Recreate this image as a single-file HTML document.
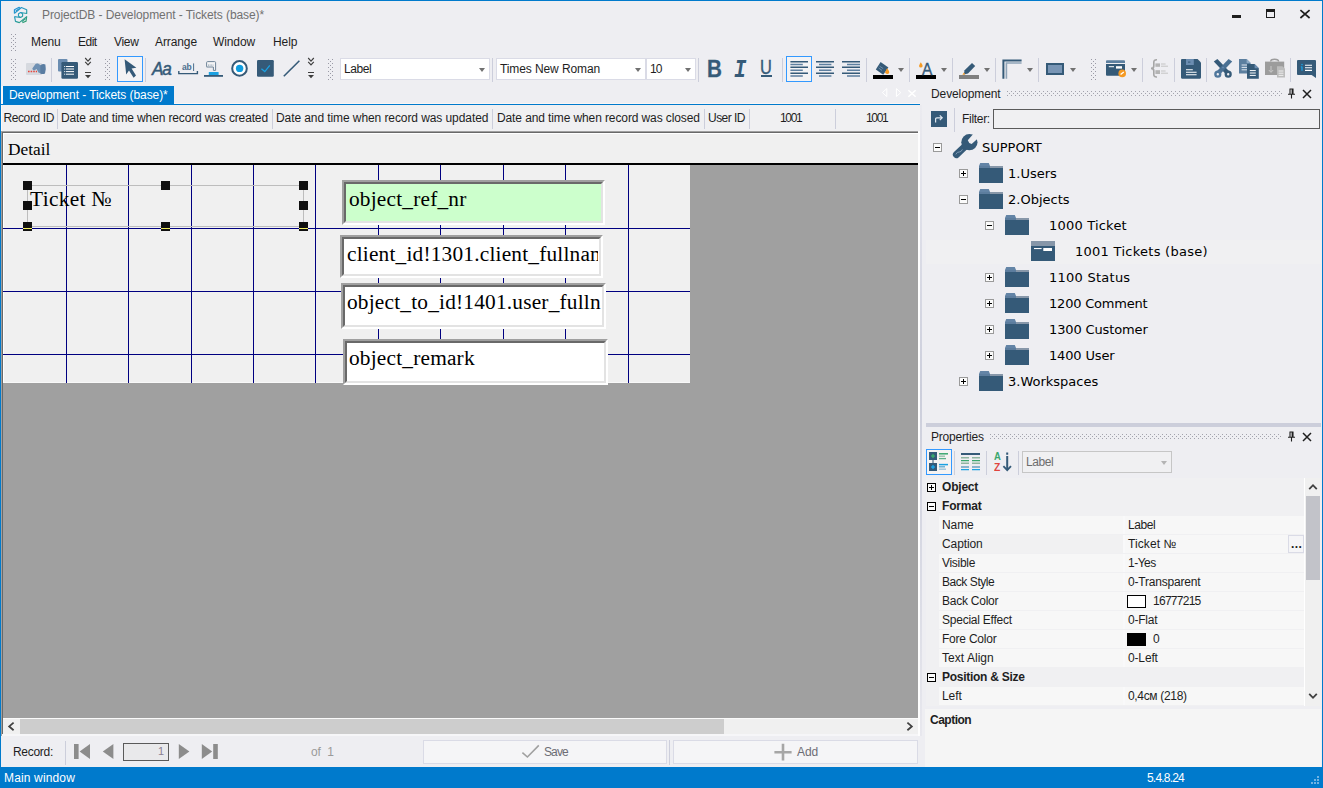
<!DOCTYPE html>
<html><head><meta charset="utf-8"><title>ProjectDB - Development - Tickets (base)*</title>
<style>
html,body{margin:0;padding:0}
body{width:1323px;height:788px;position:relative;overflow:hidden;background:#eeeef2;font-family:"Liberation Sans",sans-serif;font-size:12px;color:#1e1e1e;line-height:14px}
.a,.t,.sep,.grip,.dd,svg{position:absolute}
.t{white-space:pre;line-height:14px;height:14px;letter-spacing:-0.1px}
.sep{width:1px;background:#cccedb}
.grip{width:5px;background-image:radial-gradient(circle at 0.5px 0.5px,#9a9aa6 0.6px,transparent 0.8px),radial-gradient(circle at 2.5px 2.5px,#9a9aa6 0.6px,transparent 0.8px);background-size:4px 4px}
.dd{width:0;height:0;border-left:3.5px solid transparent;border-right:3.5px solid transparent;border-top:4px solid #717171}
.combo{position:absolute;background:#fff;border:1px solid #dadbe6;box-sizing:border-box}
.ser{font-family:"Liberation Serif",serif}
.tree{font-family:"DejaVu Sans",sans-serif;font-size:13px;line-height:16px;height:16px;letter-spacing:0}
.b{font-weight:bold}
.hd{width:9px;height:9px;background:#101010}
.tb{position:absolute;box-sizing:border-box;border:2px solid;border-color:#a0a0a0 #fff #fff #a0a0a0}
.tb i{display:block;width:100%;height:100%;box-sizing:border-box;border:2px solid;border-color:#696969 #e3e3e3 #e3e3e3 #696969;background:#fff}
.f{font-size:21.33px;height:25px;line-height:25px;color:#000;letter-spacing:.2px}
.dots{position:absolute;background-image:radial-gradient(circle at 0.5px 0.5px,#a3a3ad 0.6px,transparent 0.8px),radial-gradient(circle at 2.5px 2.5px,#a3a3ad 0.6px,transparent 0.8px);background-size:4px 4px}
</style></head><body>
<!--TITLEBAR-->
<svg style="left:8px;top:2px" width="28" height="26" viewBox="8 2 28 26" fill="none" stroke="url(#lg)" stroke-width="1.15" stroke-linejoin="round">
<defs><linearGradient id="lg" gradientUnits="userSpaceOnUse" x1="14" y1="7" x2="27" y2="23"><stop offset="0" stop-color="#1c8ee0"/><stop offset=".5" stop-color="#2a9db4"/><stop offset="1" stop-color="#2f9e62"/></linearGradient></defs>
<path d="M14.4 13.4 V9.8 L19.2 7.3 L19.8 8.3"/><path d="M14.5 13.4 L21.4 7.5 L26.7 9.7 V13.5 L20.6 12.5"/><path d="M15.6 11.3 L19.6 8.5"/>
<path d="M18.5 13.7 L20.6 12.6 L22.6 13.7 V16.3 L20.6 17.4 L18.5 16.3Z"/>
<path d="M14.3 16.6 L20.6 17.5"/><path d="M14.6 16.8 L15.5 21.4 L19.3 22.6 L26.7 16.6 L26 21.3 L22.4 22.6"/><path d="M21.8 21.6 L25.6 18.6"/>
</svg>
<div class="t" style="left:42px;top:8px;color:#717171;letter-spacing:-0.08px">ProjectDB - Development - Tickets (base)*</div>
<div class="a" style="left:1232px;top:15px;width:9px;height:3px;background:#1e1e1e"></div>
<div class="a" style="left:1266px;top:9px;width:9px;height:9px;box-sizing:border-box;border:1px solid #1e1e1e;border-top-width:3px"></div>
<svg style="left:1299px;top:8px" width="12" height="12" viewBox="0 0 12 12"><path d="M1.4 2.2 L10.6 10 M10.6 2.2 L1.4 10" stroke="#1e1e1e" stroke-width="1.7" fill="none"/></svg>
<!--MENU-->
<div class="grip" style="left:11px;top:34px;height:18px"></div>
<div class="t" style="left:31px;top:35px">Menu</div>
<div class="t" style="left:78px;top:35px;letter-spacing:-.5px">Edit</div>
<div class="t" style="left:114px;top:35px;letter-spacing:-.3px">View</div>
<div class="t" style="left:155px;top:35px">Arrange</div>
<div class="t" style="left:213px;top:35px">Window</div>
<div class="t" style="left:273px;top:35px">Help</div>
<!--TOOLBAR-->
<div class="grip" style="left:11px;top:59px;height:22px"></div>
<svg style="left:25px;top:61px" width="22" height="16" viewBox="25 61 22 16">
<rect x="26" y="63" width="16" height="12" rx="1" fill="#d6d9df"/>
<path d="M28 71.5h9" stroke="#e8463c" stroke-width="1.4" stroke-dasharray="1.6 1"/>
<path d="M32.3 68.5 L35.5 64 Q36.5 63 38 63.6 L41 65.4 L41 73.6 L38.4 72.6 L36.6 69 L34.2 70.4 Q32.6 70.4 32.3 68.5Z" fill="#6f90b3"/>
<path d="M40.4 65.2 Q43 63.2 45.4 64.4 Q46.4 69 45 73.6 Q42.6 74.6 40.4 73.6 Z" fill="#5a7da2"/>
</svg>
<div class="sep" style="left:51px;top:58px;height:24px"></div>
<svg style="left:57px;top:58px" width="22" height="22" viewBox="57 58 22 22">
<rect x="58" y="59" width="9.5" height="12.5" rx="1" fill="#6b8db1"/>
<rect x="61.4" y="62" width="16.6" height="16.8" rx="1.2" fill="#355a78"/>
<path d="M66 66.5h8M66 69h8M66 71.6h8M66 74.2h8" stroke="#fff" stroke-width="1"/>
<path d="M64.2 66.5h1M64.2 69h1M64.2 71.6h1M64.2 74.2h1" stroke="#fff" stroke-width="1"/>
</svg>
<svg class="ovf" style="left:84px;top:57px" width="8" height="23" viewBox="0 0 8 23"><path d="M1.2 1 L4 4.2 L6.8 1 M1.2 4.8 L4 8 L6.8 4.8" stroke="#3e3e3e" stroke-width="1.15" fill="none"/><path d="M1 15.5h6" stroke="#3e3e3e" stroke-width="1"/><path d="M1 18h6l-3 3.2z" fill="#3e3e3e"/></svg>
<div class="grip" style="left:105px;top:59px;height:22px"></div>
<div class="a" style="left:117px;top:56px;width:26px;height:26px;box-sizing:border-box;border:1px solid #3399ff;background:#f4f3f4"></div>
<svg style="left:122px;top:58px" width="17" height="21" viewBox="122 58 17 21"><path d="M124.6 59.2 L136.4 67.8 L131.6 68.6 L136 75.6 L133.6 77.8 L129 70.4 L126.2 74.4 Z" fill="#355a78"/></svg>
<div class="sep" style="left:145px;top:58px;height:24px"></div>
<div class="t" style="left:152px;top:59px;height:20px;line-height:20px;font-size:18px;font-style:italic;color:#355a78;letter-spacing:-1.2px;transform-origin:0 0;transform:scaleX(.95);-webkit-text-stroke:.5px #355a78">Aa</div>
<svg style="left:177px;top:62px" width="22" height="14" viewBox="177 62 22 14"><path d="M178.8 71 V73.6 H197.4 V71" stroke="#355a78" stroke-width="1.4" fill="none"/><text x="182" y="69.6" font-family="Liberation Sans,sans-serif" font-size="8.5" font-weight="bold" fill="#4c6f8e" letter-spacing="-0.3">ab</text><path d="M193.6 63.4V71" stroke="#4c6f8e" stroke-width="1"/></svg>
<svg style="left:203px;top:60px" width="21" height="18" viewBox="203 60 21 18">
<path d="M206.6 66.6 V62.6 Q206.6 61.6 207.6 61.6 H214.6 Q215.6 61.6 215.6 62.6 V70.4 H213.4 V67 H206.6Z" fill="#f4f4f6" stroke="#6f8499" stroke-width="1"/>
<path d="M208 65.2h5.4" stroke="#9aabbb" stroke-width="1.2" stroke-dasharray="1 .6"/>
<rect x="208.8" y="72" width="9.8" height="3" fill="#1ba1e2"/>
<rect x="204" y="75" width="19" height="1.8" fill="#355a78"/>
</svg>
<svg style="left:230px;top:59px" width="19" height="19" viewBox="230 59 19 19"><circle cx="239.5" cy="68.4" r="7.3" fill="#fff" stroke="#355a78" stroke-width="2"/><circle cx="239.6" cy="68.4" r="3.7" fill="#0e9de0"/></svg>
<svg style="left:256px;top:59px" width="19" height="19" viewBox="256 59 19 19"><rect x="257" y="60" width="16.8" height="16.8" rx="1.2" fill="#355a78"/><path d="M261.4 68.8 L264.8 71.6 L269.8 65.4" stroke="#1ba1e2" stroke-width="1.3" fill="none"/></svg>
<svg style="left:282px;top:59px" width="19" height="19" viewBox="282 59 19 19"><path d="M283.8 76.2 L299.4 60.8" stroke="#355a78" stroke-width="1.6"/></svg>
<svg class="ovf" style="left:307px;top:57px" width="8" height="23" viewBox="0 0 8 23"><path d="M1.2 1 L4 4.2 L6.8 1 M1.2 4.8 L4 8 L6.8 4.8" stroke="#3e3e3e" stroke-width="1.15" fill="none"/><path d="M1 15.5h6" stroke="#3e3e3e" stroke-width="1"/><path d="M1 18h6l-3 3.2z" fill="#3e3e3e"/></svg>
<div class="grip" style="left:328px;top:59px;height:22px"></div>
<div class="combo" style="left:340px;top:58px;width:150px;height:22px"></div>
<div class="t" style="left:344px;top:62px;letter-spacing:-.4px">Label</div>
<div class="dd" style="left:479px;top:68px"></div>
<div class="sep" style="left:492px;top:58px;height:24px"></div>
<div class="combo" style="left:496px;top:58px;width:150px;height:22px"></div>
<div class="t" style="left:500px;top:62px">Times New Roman</div>
<div class="dd" style="left:635px;top:68px"></div>
<div class="combo" style="left:646px;top:58px;width:50px;height:22px"></div>
<div class="t" style="left:650px;top:62px;letter-spacing:-1px">10</div>
<div class="dd" style="left:685px;top:68px"></div>
<div class="sep" style="left:698px;top:58px;height:24px"></div>
<div class="t b" style="left:707px;top:55px;height:28px;line-height:28px;font-size:24px;color:#355a78;transform-origin:0 0;transform:scaleX(.86);letter-spacing:0;-webkit-text-stroke:.3px #355a78">B</div>
<div class="t b" style="left:734px;top:57px;height:28px;line-height:28px;font-size:25px;color:#355a78;font-family:'Liberation Mono',monospace;font-style:italic;letter-spacing:0;transform-origin:0 0;transform:scaleX(.82)">I</div>
<div class="t" style="left:760px;top:56px;height:22px;line-height:22px;font-size:20.5px;color:#355a78;transform-origin:0 0;transform:scaleX(.8);letter-spacing:0;-webkit-text-stroke:.4px #355a78">U</div>
<div class="a" style="left:761px;top:75px;width:11px;height:2px;background:#355a78"></div>
<div class="sep" style="left:782px;top:58px;height:24px"></div>
<div class="a" style="left:786px;top:56px;width:26px;height:26px;box-sizing:border-box;border:1px solid #3399ff;background:#f4f3f4"></div>
<svg style="left:789px;top:60px" width="72" height="18" viewBox="789 60 72 18" stroke-width="1.5">
<path d="M790.4 61.8h17.6M790.4 67.3h17.6M790.4 73.2h17.6" stroke="#355a78"/><path d="M790.4 64.5h12.4M790.4 70.2h12.4M790.4 76h12.4" stroke="#5d7f9f"/>
<path d="M816 61.8h18M816 67.3h18M816 73.2h18" stroke="#355a78"/><path d="M819 64.5h12.4M819 70.2h12.4M819 76h12.4" stroke="#5d7f9f"/>
<path d="M842 61.8h18M842 67.3h18M842 73.2h18" stroke="#355a78"/><path d="M847 64.5h13M847 70.2h13M847 76h13" stroke="#5d7f9f"/>
</svg>
<div class="sep" style="left:866px;top:58px;height:24px"></div>
<svg style="left:872px;top:60px" width="22" height="20" viewBox="872 60 22 20">
<path d="M880.6 62 L888.4 67.4 L883.2 74.8 L875.8 69.6 Z" fill="#355a78"/><path d="M879.6 66.2 l3.6 2.4 M878.6 68 l3.4 2.4" stroke="#7f9ab5" stroke-width=".8"/>
<path d="M887.2 68.2 Q889.4 71 889.2 72.4 Q888.8 74 887.2 74 Q885.4 74 885.2 72.2 Q885.4 70.6 887.2 68.2Z" fill="#f59a23"/>
<rect x="873" y="75" width="20" height="4" fill="#000"/></svg>
<div class="dd" style="left:898px;top:68px"></div>
<div class="sep" style="left:909px;top:58px;height:24px"></div>
<svg style="left:915px;top:60px" width="22" height="20" viewBox="915 60 22 20">
<path d="M920.8 62.2 Q922.8 65 922.6 66.2 Q922.2 67.6 920.8 67.6 Q919.2 67.6 919 66 Q919.2 64.6 920.8 62.2Z" fill="#f59a23"/>
<rect x="916" y="75" width="20" height="4" fill="#000"/></svg>
<div class="t" style="left:921.8px;top:58.7px;height:20px;line-height:20px;font-size:17.2px;color:#355a78;letter-spacing:0;transform-origin:0 0;transform:scaleX(.9);-webkit-text-stroke:.35px #355a78">A</div>
<div class="dd" style="left:941px;top:68px"></div>
<div class="sep" style="left:952px;top:58px;height:24px"></div>
<svg style="left:958px;top:60px" width="22" height="20" viewBox="958 60 22 20">
<path d="M964.6 70.2 L972 63 L975.2 66 L968 73.4 L963.8 74.4 Z" fill="#355a78"/><path d="M962.4 75 L963.8 72.6 L965.4 74.2Z" fill="#f59a23"/>
<rect x="959" y="75" width="20" height="4" fill="#808080"/></svg>
<div class="dd" style="left:984px;top:68px"></div>
<div class="sep" style="left:995px;top:58px;height:24px"></div>
<svg style="left:1001px;top:58px" width="22" height="22" viewBox="1001 58 22 22"><path d="M1003.4 78.8 V60.4 H1021.6" stroke="#355a78" stroke-width="2" fill="none"/><path d="M1006.4 78.8 V63 H1021.6" stroke="#8fa4b8" stroke-width="1.6" fill="none"/></svg>
<div class="dd" style="left:1027px;top:68px"></div>
<div class="sep" style="left:1038px;top:58px;height:24px"></div>
<div class="a" style="left:1046px;top:63px;width:18px;height:12px;box-sizing:border-box;border:2px solid #355a78;background:#7895b5"></div>
<div class="dd" style="left:1070px;top:68px"></div>
<div class="grip" style="left:1091px;top:59px;height:22px"></div>
<svg style="left:1105px;top:59px" width="23" height="20" viewBox="1105 59 23 20">
<path d="M1106 61.2 Q1106 60.2 1107 60.2 H1124 Q1125 60.2 1125 61.2 V63 H1106Z" fill="#5c7f9f"/>
<path d="M1106 64 H1125 V74.8 Q1125 75.8 1124 75.8 H1107 Q1106 75.8 1106 74.8Z" fill="#355a78"/>
<rect x="1108.8" y="66.2" width="5.2" height="1" fill="#fff"/><rect x="1116" y="66.2" width="6" height="2.4" fill="#fff"/>
<circle cx="1122.2" cy="73.4" r="3.8" fill="#f59a23"/><path d="M1120.6 74.6 l3.2 -2.6" stroke="#fff" stroke-width="1.3"/></svg>
<div class="dd" style="left:1131px;top:68px"></div>
<div class="sep" style="left:1142px;top:58px;height:24px"></div>
<svg style="left:1149px;top:58px" width="21" height="21" viewBox="1149 58 21 21">
<path d="M1157 59.8 Q1153.6 59.6 1153.8 62.4 V66 Q1153.8 68.4 1151 68.4 Q1153.8 68.4 1153.8 70.8 V74.4 Q1153.6 77.2 1157 77" stroke="#a6a6a6" stroke-width="1.6" fill="none"/>
<rect x="1155.4" y="63.4" width="4.6" height="3.4" fill="#b4b4b4"/><rect x="1155.4" y="70.2" width="4.6" height="3.8" fill="#b4b4b4"/>
<path d="M1161 64h4.6M1161 66.2h7M1161 71h4.6M1161 73.2h7" stroke="#c4c4c4" stroke-width="1"/></svg>
<div class="sep" style="left:1174px;top:58px;height:24px"></div>
<svg style="left:1180px;top:58px" width="22" height="22" viewBox="1180 58 22 22">
<path d="M1182 59 H1197.6 L1201 62.4 V77.6 Q1201 78.7 1200 78.7 H1182 Q1181 78.7 1181 77.6 V60 Q1181 59 1182 59Z" fill="#355a78"/>
<rect x="1186" y="59" width="7.8" height="6" fill="#6b8db1"/><rect x="1188" y="61.6" width="2.4" height="1" fill="#355a78"/>
<path d="M1186 69.8h6.8M1186 72.2h10.6M1186 74.7h10.6" stroke="#fff" stroke-width="1.1"/></svg>
<div class="sep" style="left:1206px;top:58px;height:24px"></div>
<svg style="left:1213px;top:58px" width="21" height="21" viewBox="1213 58 21 21">
<path d="M1213.8 61.4 L1217.4 59 L1230.4 72.4 L1226.6 75Z" fill="#355a78"/><path d="M1232.2 61.4 L1228.6 59 L1215.6 72.4 L1219.4 75Z" fill="#4a7093"/>
<circle cx="1217.8" cy="74.2" r="2.4" fill="#eeeef2" stroke="#4f779c" stroke-width="2.4"/><circle cx="1228.2" cy="74.2" r="2.4" fill="#eeeef2" stroke="#355a78" stroke-width="2.4"/><circle cx="1223" cy="67.6" r=".8" fill="#6b8db1"/></svg>
<svg style="left:1238px;top:58px" width="22" height="22" viewBox="1238 58 22 22">
<path d="M1239 59 H1246.6 L1250.6 63 V73.4 H1239Z" fill="#5c7f9f"/><path d="M1246.6 59 V63 H1250.6Z" fill="#8fabc6"/>
<path d="M1241.6 65h6M1241.6 67.4h6M1241.6 69.8h6" stroke="#dfe7ef" stroke-width="1"/>
<path d="M1247 64 H1254.6 L1258.8 68.2 V78.7 H1247Z" fill="#355a78"/><path d="M1254.6 64 V68.2 H1258.8Z" fill="#6b8db1"/>
<path d="M1249.8 70.6h6M1249.8 73h6M1249.8 75.4h6" stroke="#fff" stroke-width="1"/></svg>
<svg style="left:1264px;top:58px" width="22" height="22" viewBox="1264 58 22 22">
<path d="M1265 61.6 H1284.2 V75 H1265Z" fill="#9c9c9c"/><path d="M1270.6 61.6 Q1270.6 59.2 1274.6 59.2 Q1278.6 59.2 1278.6 61.6" stroke="#9c9c9c" stroke-width="1.4" fill="none"/>
<path d="M1271 66v6M1268.8 70l2.2 2.4 2.2-2.4" stroke="#c8c8c8" stroke-width="1" fill="none"/>
<path d="M1277 66.2 H1282.4 L1285 68.8 V77.6 H1277Z" fill="#bcbcbc"/><path d="M1278.6 71h4.8M1278.6 73.2h4.8M1278.6 75.4h4.8" stroke="#eee" stroke-width="1"/></svg>
<div class="sep" style="left:1290px;top:58px;height:24px"></div>
<svg style="left:1296px;top:59px" width="21" height="20" viewBox="1296 59 21 20">
<path d="M1298 60 H1315 Q1316 60 1316 61 V78 L1311.6 75 H1298 Q1297 75 1297 74 V61 Q1297 60 1298 60Z" fill="#355a78"/>
<path d="M1302 66.4v4.4M1300.8 66.8h1.2" stroke="#1ba1e2" stroke-width="1.3"/><circle cx="1302" cy="64.6" r=".8" fill="#1ba1e2"/>
<path d="M1305 65.2h7M1305 67.8h7M1305 70.4h7" stroke="#fff" stroke-width="1.1"/></svg>
<!--DOC-->
<!-- tab strip -->
<div class="a" style="left:3px;top:86px;width:171px;height:18px;background:#007acc"></div>
<div class="t" style="left:9px;top:88px;color:#fff;letter-spacing:-0.07px">Development - Tickets (base)*</div>
<div class="a" style="left:1px;top:104px;width:919px;height:1px;background:#007acc"></div>
<div class="a" style="left:1px;top:105px;width:1px;height:26px;background:#fdf8f6"></div>
<div class="a" style="left:1px;top:105px;width:918px;height:1px;background:#fbf9f9"></div>
<svg style="left:880px;top:86px" width="38" height="14" viewBox="880 86 38 14"><path d="M886.8 88.6 v8 l-4.4 -4z M896.4 88.6 v8 l4.4 -4z" fill="none" stroke="#fff" stroke-width="1"/><path d="M908.4 90.2 l7.2 6.6 M915.6 90.2 l-7.2 6.6" stroke="#fff" stroke-width="1.5"/></svg>
<div class="a" style="left:174px;top:103px;width:746px;height:1px;background:#fbf6f4"></div>
<div class="a" style="left:1px;top:86px;width:2px;height:18px;background:#fdf8f6"></div>
<!-- column header -->
<div class="a" style="left:2px;top:105px;width:918px;height:26px;background:#f0f0f2"></div>
<div class="t" style="left:3.4px;top:111px;letter-spacing:-.38px">Record ID</div>
<div class="sep" style="left:57px;top:109px;height:20px"></div>
<div class="t" style="left:61px;top:111px;letter-spacing:-0.14px">Date and time when record was created</div>
<div class="sep" style="left:272px;top:109px;height:20px"></div>
<div class="t" style="left:276px;top:111px;letter-spacing:-0.085px">Date and time when record was updated</div>
<div class="sep" style="left:492px;top:109px;height:20px"></div>
<div class="t" style="left:497px;top:111px;letter-spacing:-0.11px">Date and time when record was closed</div>
<div class="sep" style="left:704px;top:109px;height:20px"></div>
<div class="t" style="left:708px;top:111px;letter-spacing:-.53px">User ID</div>
<div class="sep" style="left:749px;top:109px;height:20px"></div>
<div class="t" style="left:780px;top:111px;letter-spacing:-1.3px">1001</div>
<div class="sep" style="left:835px;top:109px;height:20px"></div>
<div class="t" style="left:866px;top:111px;letter-spacing:-1.3px">1001</div>
<!-- form design surface -->
<div class="a" style="left:2px;top:131px;width:916px;height:587px;background:#a0a0a0"></div>
<div class="a" style="left:1px;top:131px;width:917px;height:1px;background:#a0a0a0"></div>
<div class="a" style="left:1px;top:131px;width:1px;height:605px;background:#a0a0a0"></div>
<div class="a" style="left:2px;top:132px;width:916px;height:1px;background:#696969"></div>
<div class="a" style="left:2px;top:132px;width:1px;height:604px;background:#696969"></div>
<div class="a" style="left:3px;top:133px;width:915px;height:30px;background:#f0f0f0;box-sizing:border-box;border-left:1px solid #fff;border-top:1px solid #fff"></div>
<div class="t ser" style="left:8px;top:140px;font-size:17.33px;height:20px;line-height:20px;color:#000;letter-spacing:0">Detail</div>
<div class="a" style="left:3px;top:163px;width:915px;height:2px;background:#000"></div>
<div class="a" id="grid" style="left:3px;top:165px;width:687px;height:218px;background:#f0f0f0;box-sizing:border-box;border-left:1px solid #fff;border-bottom:1px solid #f8f8f8"></div>
<div class="a" style="left:66px;top:165px;width:1px;height:218px;background:#000080"></div>
<div class="a" style="left:128px;top:165px;width:1px;height:218px;background:#000080"></div>
<div class="a" style="left:191px;top:165px;width:1px;height:218px;background:#000080"></div>
<div class="a" style="left:253px;top:165px;width:1px;height:218px;background:#000080"></div>
<div class="a" style="left:315px;top:165px;width:1px;height:218px;background:#000080"></div>
<div class="a" style="left:378px;top:165px;width:1px;height:218px;background:#000080"></div>
<div class="a" style="left:440px;top:165px;width:1px;height:218px;background:#000080"></div>
<div class="a" style="left:503px;top:165px;width:1px;height:218px;background:#000080"></div>
<div class="a" style="left:565px;top:165px;width:1px;height:218px;background:#000080"></div>
<div class="a" style="left:628px;top:165px;width:1px;height:218px;background:#000080"></div>
<div class="a" style="left:3px;top:228px;width:687px;height:1px;background:#000080"></div>
<div class="a" style="left:3px;top:291px;width:687px;height:1px;background:#000080"></div>
<div class="a" style="left:3px;top:354px;width:687px;height:1px;background:#000080"></div>
<!-- label -->
<div class="a" style="left:27px;top:185px;width:277px;height:42px;box-sizing:border-box;border:1px solid #bdbdbd"></div>
<div class="t ser" style="left:30px;top:187px;font-size:21.33px;height:25px;line-height:25px;color:#000;letter-spacing:.35px">Ticket №</div>
<div class="a hd" style="left:23px;top:181px"></div>
<div class="a hd" style="left:161px;top:181px"></div>
<div class="a hd" style="left:299px;top:181px"></div>
<div class="a hd" style="left:23px;top:201px"></div>
<div class="a hd" style="left:299px;top:201px"></div>
<div class="a hd" style="left:23px;top:222px"></div>
<div class="a hd" style="left:161px;top:222px"></div>
<div class="a hd" style="left:299px;top:222px"></div>
<div class="a" style="left:23px;top:228px;width:9px;height:1px;background:#f4f060"></div>
<div class="a" style="left:161px;top:228px;width:9px;height:1px;background:#f4f060"></div>
<div class="a" style="left:299px;top:228px;width:9px;height:1px;background:#f4f060"></div>
<!-- textboxes -->
<div class="tb" style="left:342px;top:180px;width:263px;height:45px"><i style="background:#ccffcc"></i></div>
<div class="t ser f" style="left:349px;top:187px">object_ref_nr</div>
<div class="tb" style="left:340px;top:235px;width:263px;height:43px"><i></i></div>
<div class="t ser f" style="left:347px;top:242px;width:251px;overflow:hidden">client_id!1301.client_fullname</div>
<div class="tb" style="left:341px;top:283px;width:265px;height:46px"><i></i></div>
<div class="t ser f" style="left:347px;top:290px;width:254px;overflow:hidden">object_to_id!1401.user_fullname</div>
<div class="tb" style="left:343px;top:339px;width:265px;height:46px"><i></i></div>
<div class="t ser f" style="left:349px;top:346px">object_remark</div>
<!-- h scrollbar -->
<div class="a" style="left:3px;top:718px;width:915px;height:1px;background:#fafafa"></div>
<div class="a" style="left:3px;top:719px;width:915px;height:15px;background:#f0f0f0"></div>
<div class="a" style="left:20px;top:719px;width:704px;height:15px;background:#cdcdcd"></div>
<svg style="left:6px;top:721px" width="10" height="11" viewBox="0 0 10 11"><path d="M7.6 1.6 L3.2 5.4 L7.6 9.2" stroke="#404040" stroke-width="1.8" fill="none"/></svg>
<svg style="left:905px;top:721px" width="10" height="11" viewBox="0 0 10 11"><path d="M2.4 1.6 L6.8 5.4 L2.4 9.2" stroke="#404040" stroke-width="1.8" fill="none"/></svg>
<div class="a" style="left:2px;top:734px;width:917px;height:2px;background:#f6f6f8"></div>
<div class="a" style="left:918px;top:131px;width:2px;height:605px;background:#fdfdfd"></div>
<!--RIGHT-->
<div class="a" style="left:920px;top:105px;width:2px;height:631px;background:linear-gradient(to bottom,#ebebf0 0%,#e0e1ea 15%,#cccedb 45%,#dcdde6 80%,#e8e8ee 100%)"></div>
<div class="t" style="left:931px;top:87px;color:#1e1e1e">Development</div>
<div class="dots" style="left:1007px;top:91px;width:275px;height:6px"></div>
<svg style="left:1287px;top:88px" width="9" height="11" viewBox="0 0 9 11"><path d="M2.5 1 h4 M3 1 v5 M6 1 v5 M5.2 1v5 M1 6.2 h7 M4.5 6.2 v4.2" stroke="#1e1e1e" stroke-width="1.1" fill="none"/></svg>
<svg style="left:1302px;top:89px" width="10" height="10" viewBox="0 0 10 10"><path d="M1 1 L9 9 M9 1 L1 9" stroke="#1e1e1e" stroke-width="1.5" fill="none"/></svg>
<div class="a" style="left:931px;top:111px;width:16px;height:16px;background:#355a78"></div>
<svg style="left:931px;top:111px" width="16" height="16" viewBox="0 0 16 16"><path d="M4.6 11.4 V8 Q4.6 6.8 5.8 6.8 H11 M8.8 4.4 L11.2 6.8 L8.8 9.2" stroke="#dfe7ef" stroke-width="1.2" fill="none"/></svg>
<div class="sep" style="left:954px;top:108px;height:24px"></div>
<div class="t" style="left:962px;top:112px;letter-spacing:-.3px">Filter:</div>
<div class="a" style="left:993px;top:109px;width:327px;height:20px;box-sizing:border-box;border:1px solid #5a5a5a;background:#f0f0f2"></div>
<div class="a" style="left:926px;top:240px;width:395px;height:24px;background:#f0f0f2"></div>
<div class="a" style="left:933px;top:143px;width:9px;height:9px;box-sizing:border-box;border:1px solid #9a9a9a;background:#fbfbfb"></div><div class="a" style="left:935px;top:147px;width:5px;height:1px;background:#000"></div>
<svg style="left:950px;top:132px" width="29" height="29" viewBox="950 132 29 29"><path d="M956.4 154.6 L966.5 145" stroke="#355a78" stroke-width="7" stroke-linecap="round"/><circle cx="969.4" cy="142.2" r="8.1" fill="#355a78"/><path d="M967.8 140.2 L976.7 130.1 L981.7 135.1 L971.6 144 Q968.6 143.4 967.8 140.2Z" fill="#eeeef2"/><path d="M955.8 154.4 q1.4-2.8 3.4-2.4 q2 .2 3.2-2.6" stroke="#7f9ab5" stroke-width="1" fill="none"/></svg>
<div class="t tree" style="left:982px;top:140px;letter-spacing:0px;color:#000">SUPPORT</div>
<div class="a" style="left:959px;top:169px;width:9px;height:9px;box-sizing:border-box;border:1px solid #9a9a9a;background:#fbfbfb"></div><div class="a" style="left:961px;top:173px;width:5px;height:1px;background:#000"></div><div class="a" style="left:963px;top:171px;width:1px;height:5px;background:#000"></div>
<svg style="left:979px;top:163px" width="24" height="20" viewBox="0 0 24 20"><path d="M1.2 0 H9.8 L11 3 H0 Z" fill="#6384a6"/><rect x="0" y="3" width="24" height="2.2" fill="#8797a9"/><rect x="0" y="3" width="11" height="2.2" fill="#5c7d9e"/><rect x="0" y="5" width="24" height="15" fill="#355a78"/></svg>
<div class="t tree" style="left:1008px;top:166px;letter-spacing:0px;color:#000">1.Users</div>
<div class="a" style="left:959px;top:195px;width:9px;height:9px;box-sizing:border-box;border:1px solid #9a9a9a;background:#fbfbfb"></div><div class="a" style="left:961px;top:199px;width:5px;height:1px;background:#000"></div>
<svg style="left:979px;top:189px" width="24" height="20" viewBox="0 0 24 20"><path d="M1.2 0 H9.8 L11 3 H0 Z" fill="#6384a6"/><rect x="0" y="3" width="24" height="2.2" fill="#8797a9"/><rect x="0" y="3" width="11" height="2.2" fill="#5c7d9e"/><rect x="0" y="5" width="24" height="15" fill="#355a78"/></svg>
<div class="t tree" style="left:1008px;top:192px;letter-spacing:0px;color:#000">2.Objects</div>
<div class="a" style="left:985px;top:221px;width:9px;height:9px;box-sizing:border-box;border:1px solid #9a9a9a;background:#fbfbfb"></div><div class="a" style="left:987px;top:225px;width:5px;height:1px;background:#000"></div>
<svg style="left:1005px;top:215px" width="24" height="20" viewBox="0 0 24 20"><path d="M1.2 0 H9.8 L11 3 H0 Z" fill="#6384a6"/><rect x="0" y="3" width="24" height="2.2" fill="#8797a9"/><rect x="0" y="3" width="11" height="2.2" fill="#5c7d9e"/><rect x="0" y="5" width="24" height="15" fill="#355a78"/></svg>
<div class="t tree" style="left:1049px;top:218px;letter-spacing:0.2px;color:#000">1000 Ticket</div>
<svg style="left:1031px;top:241px" width="24" height="20" viewBox="0 0 24 20"><rect width="24" height="5" fill="#8797a9"/><rect y="5" width="24" height="15" fill="#355a78"/><rect x="3" y="7" width="7.6" height="1.1" fill="#fff"/><rect x="12.3" y="7" width="8.7" height="3" fill="#fff"/></svg>
<div class="t tree" style="left:1075px;top:244px;letter-spacing:0.27px;color:#000">1001 Tickets (base)</div>
<div class="a" style="left:985px;top:273px;width:9px;height:9px;box-sizing:border-box;border:1px solid #9a9a9a;background:#fbfbfb"></div><div class="a" style="left:987px;top:277px;width:5px;height:1px;background:#000"></div><div class="a" style="left:989px;top:275px;width:1px;height:5px;background:#000"></div>
<svg style="left:1005px;top:267px" width="24" height="20" viewBox="0 0 24 20"><path d="M1.2 0 H9.8 L11 3 H0 Z" fill="#6384a6"/><rect x="0" y="3" width="24" height="2.2" fill="#8797a9"/><rect x="0" y="3" width="11" height="2.2" fill="#5c7d9e"/><rect x="0" y="5" width="24" height="15" fill="#355a78"/></svg>
<div class="t tree" style="left:1049px;top:270px;letter-spacing:0.25px;color:#000">1100 Status</div>
<div class="a" style="left:985px;top:299px;width:9px;height:9px;box-sizing:border-box;border:1px solid #9a9a9a;background:#fbfbfb"></div><div class="a" style="left:987px;top:303px;width:5px;height:1px;background:#000"></div><div class="a" style="left:989px;top:301px;width:1px;height:5px;background:#000"></div>
<svg style="left:1005px;top:293px" width="24" height="20" viewBox="0 0 24 20"><path d="M1.2 0 H9.8 L11 3 H0 Z" fill="#6384a6"/><rect x="0" y="3" width="24" height="2.2" fill="#8797a9"/><rect x="0" y="3" width="11" height="2.2" fill="#5c7d9e"/><rect x="0" y="5" width="24" height="15" fill="#355a78"/></svg>
<div class="t tree" style="left:1049px;top:296px;letter-spacing:-0.2px;color:#000">1200 Comment</div>
<div class="a" style="left:985px;top:325px;width:9px;height:9px;box-sizing:border-box;border:1px solid #9a9a9a;background:#fbfbfb"></div><div class="a" style="left:987px;top:329px;width:5px;height:1px;background:#000"></div><div class="a" style="left:989px;top:327px;width:1px;height:5px;background:#000"></div>
<svg style="left:1005px;top:319px" width="24" height="20" viewBox="0 0 24 20"><path d="M1.2 0 H9.8 L11 3 H0 Z" fill="#6384a6"/><rect x="0" y="3" width="24" height="2.2" fill="#8797a9"/><rect x="0" y="3" width="11" height="2.2" fill="#5c7d9e"/><rect x="0" y="5" width="24" height="15" fill="#355a78"/></svg>
<div class="t tree" style="left:1049px;top:322px;letter-spacing:-0.13px;color:#000">1300 Customer</div>
<div class="a" style="left:985px;top:351px;width:9px;height:9px;box-sizing:border-box;border:1px solid #9a9a9a;background:#fbfbfb"></div><div class="a" style="left:987px;top:355px;width:5px;height:1px;background:#000"></div><div class="a" style="left:989px;top:353px;width:1px;height:5px;background:#000"></div>
<svg style="left:1005px;top:345px" width="24" height="20" viewBox="0 0 24 20"><path d="M1.2 0 H9.8 L11 3 H0 Z" fill="#6384a6"/><rect x="0" y="3" width="24" height="2.2" fill="#8797a9"/><rect x="0" y="3" width="11" height="2.2" fill="#5c7d9e"/><rect x="0" y="5" width="24" height="15" fill="#355a78"/></svg>
<div class="t tree" style="left:1049px;top:348px;letter-spacing:-0.15px;color:#000">1400 User</div>
<div class="a" style="left:959px;top:377px;width:9px;height:9px;box-sizing:border-box;border:1px solid #9a9a9a;background:#fbfbfb"></div><div class="a" style="left:961px;top:381px;width:5px;height:1px;background:#000"></div><div class="a" style="left:963px;top:379px;width:1px;height:5px;background:#000"></div>
<svg style="left:979px;top:371px" width="24" height="20" viewBox="0 0 24 20"><path d="M1.2 0 H9.8 L11 3 H0 Z" fill="#6384a6"/><rect x="0" y="3" width="24" height="2.2" fill="#8797a9"/><rect x="0" y="3" width="11" height="2.2" fill="#5c7d9e"/><rect x="0" y="5" width="24" height="15" fill="#355a78"/></svg>
<div class="t tree" style="left:1008px;top:374px;letter-spacing:0px;color:#000">3.Workspaces</div>
<div class="a" style="left:926px;top:423px;width:395px;height:4px;background:#cccedb"></div>
<div class="t" style="left:931px;top:430px;color:#1e1e1e;letter-spacing:-.2px">Properties</div>
<div class="dots" style="left:990px;top:434px;width:292px;height:6px"></div>
<svg style="left:1287px;top:431px" width="9" height="11" viewBox="0 0 9 11"><path d="M2.5 1 h4 M3 1 v5 M6 1 v5 M5.2 1v5 M1 6.2 h7 M4.5 6.2 v4.2" stroke="#1e1e1e" stroke-width="1.1" fill="none"/></svg>
<svg style="left:1302px;top:432px" width="10" height="10" viewBox="0 0 10 10"><path d="M1 1 L9 9 M9 1 L1 9" stroke="#1e1e1e" stroke-width="1.5" fill="none"/></svg>
<div class="a" style="left:926px;top:449px;width:26px;height:26px;box-sizing:border-box;border:1px solid #3399ff;background:#f6f3f2"></div>
<svg style="left:928px;top:451px" width="22" height="22" viewBox="928 451 22 22"><rect x="929" y="452" width="8" height="8" fill="#355a78"/><rect x="929" y="463" width="8" height="8" fill="#355a78"/><path d="M933 460v3" stroke="#355a78" stroke-width="1"/><path d="M933 453.8l2.2 2.2-2.2 2.2-2.2-2.2z" fill="#3aa76d"/><path d="M933 464.8l2.2 2.2-2.2 2.2-2.2-2.2z" fill="#1ba1e2"/>
<path d="M939 453.8h9" stroke="#3aa76d" stroke-width="1.5"/><path d="M939 456.2h6" stroke="#9dc0ac" stroke-width="1.4"/><path d="M939 458.6h7" stroke="#5fb189" stroke-width="1.3"/>
<path d="M939 464.6h9" stroke="#1ba1e2" stroke-width="1.5"/><path d="M939 466.8h6" stroke="#5da9cf" stroke-width="1.3"/><path d="M939 469.2h7" stroke="#9dc3d8" stroke-width="1.4"/></svg>
<div class="sep" style="left:954px;top:451px;height:24px"></div>
<svg style="left:960px;top:452px" width="21" height="20" viewBox="960 452 21 20"><path d="M961 454h19" stroke="#355a78" stroke-width="2"/>
<path d="M961 457.8h8M972 457.8h8M961 463.2h8M972 463.2h8" stroke="#8fb5a0" stroke-width="1.6"/><path d="M961 460.6h8M972 460.6h8" stroke="#3aa76d" stroke-width="1.2"/>
<path d="M961 467h8M972 467h8" stroke="#8ab4cc" stroke-width="1.8"/><path d="M961 469.6h8M972 469.6h8" stroke="#1ba1e2" stroke-width="1.2"/></svg>
<div class="sep" style="left:986px;top:451px;height:24px"></div>
<div class="t b" style="left:994px;top:449px;font-size:11.5px;color:#3aa76d;letter-spacing:0;transform-origin:0 0;transform:scaleX(.82)">A</div>
<div class="t b" style="left:994px;top:459.6px;font-size:11.5px;color:#e0443e;letter-spacing:0;transform-origin:0 0;transform:scaleX(.9)">Z</div>
<svg style="left:1002px;top:451px" width="11" height="21" viewBox="1002 451 11 21"><path d="M1007.2 452.6v2.2M1007.2 456v14" stroke="#355a78" stroke-width="2"/><path d="M1003.4 466.2l3.8 4 3.8-4" stroke="#355a78" stroke-width="1.8" fill="none"/></svg>
<div class="sep" style="left:1018px;top:451px;height:24px"></div>
<div class="a" style="left:1022px;top:451px;width:150px;height:22px;box-sizing:border-box;border:1px solid #c6c6c6;background:#f0f0f2"></div>
<div class="t" style="left:1026px;top:455px;color:#6d6d6d;letter-spacing:-.4px">Label</div>
<div class="dd" style="left:1161px;top:461px;border-top-color:#b4b4b4"></div>
<div class="a" style="left:926px;top:478px;width:379px;height:228px;background:#f0f0f2"></div>
<div class="a" style="left:927px;top:483px;width:9px;height:9px;box-sizing:border-box;border:1px solid #000;background:#fbfbfb"></div><div class="a" style="left:929px;top:487px;width:5px;height:1px;background:#000"></div><div class="a" style="left:931px;top:485px;width:1px;height:5px;background:#000"></div>
<div class="t b" style="left:942px;top:480px;letter-spacing:-0.2px">Object</div>
<div class="a" style="left:927px;top:502px;width:9px;height:9px;box-sizing:border-box;border:1px solid #000;background:#fbfbfb"></div><div class="a" style="left:929px;top:506px;width:5px;height:1px;background:#000"></div>
<div class="t b" style="left:942px;top:499px;letter-spacing:-0.2px">Format</div>
<div class="a" style="left:939px;top:516px;width:184px;height:18px;background:#f7f7f7"></div>
<div class="a" style="left:1123px;top:516px;width:2px;height:18px;background:#f9f9fa"></div>
<div class="a" style="left:1125px;top:516px;width:180px;height:18px;background:#f7f7f7"></div>
<div class="t" style="left:942px;top:518px;letter-spacing:-0.1px">Name</div>
<div class="t" style="left:1128px;top:518px;letter-spacing:-0.4px">Label</div>
<div class="a" style="left:939px;top:535px;width:184px;height:18px;background:#f1f1f2"></div>
<div class="a" style="left:1123px;top:535px;width:2px;height:18px;background:#f9f9fa"></div>
<div class="a" style="left:1125px;top:535px;width:180px;height:18px;background:#f7f7f7"></div>
<div class="t" style="left:942px;top:537px;letter-spacing:-0.1px">Caption</div>
<div class="t" style="left:1128px;top:537px;letter-spacing:0.09px">Ticket №</div>
<div class="a" style="left:939px;top:554px;width:184px;height:18px;background:#f7f7f7"></div>
<div class="a" style="left:1123px;top:554px;width:2px;height:18px;background:#f9f9fa"></div>
<div class="a" style="left:1125px;top:554px;width:180px;height:18px;background:#f7f7f7"></div>
<div class="t" style="left:942px;top:556px;letter-spacing:-0.29px">Visible</div>
<div class="t" style="left:1128px;top:556px;letter-spacing:-0.5px">1-Yes</div>
<div class="a" style="left:939px;top:573px;width:184px;height:18px;background:#f7f7f7"></div>
<div class="a" style="left:1123px;top:573px;width:2px;height:18px;background:#f9f9fa"></div>
<div class="a" style="left:1125px;top:573px;width:180px;height:18px;background:#f7f7f7"></div>
<div class="t" style="left:942px;top:575px;letter-spacing:-0.44px">Back Style</div>
<div class="t" style="left:1128px;top:575px;letter-spacing:-0.19px">0-Transparent</div>
<div class="a" style="left:939px;top:592px;width:184px;height:18px;background:#f7f7f7"></div>
<div class="a" style="left:1123px;top:592px;width:2px;height:18px;background:#f9f9fa"></div>
<div class="a" style="left:1125px;top:592px;width:180px;height:18px;background:#f7f7f7"></div>
<div class="t" style="left:942px;top:594px;letter-spacing:-0.24px">Back Color</div>
<div class="a" style="left:1127px;top:595px;width:19px;height:13px;box-sizing:border-box;border:1px solid #000;background:#fff"></div>
<div class="t" style="left:1153px;top:594px;letter-spacing:-0.73px">16777215</div>
<div class="a" style="left:939px;top:611px;width:184px;height:18px;background:#f7f7f7"></div>
<div class="a" style="left:1123px;top:611px;width:2px;height:18px;background:#f9f9fa"></div>
<div class="a" style="left:1125px;top:611px;width:180px;height:18px;background:#f7f7f7"></div>
<div class="t" style="left:942px;top:613px;letter-spacing:-0.24px">Special Effect</div>
<div class="t" style="left:1128px;top:613px;letter-spacing:-0.23px">0-Flat</div>
<div class="a" style="left:939px;top:630px;width:184px;height:18px;background:#f7f7f7"></div>
<div class="a" style="left:1123px;top:630px;width:2px;height:18px;background:#f9f9fa"></div>
<div class="a" style="left:1125px;top:630px;width:180px;height:18px;background:#f7f7f7"></div>
<div class="t" style="left:942px;top:632px;letter-spacing:-0.22px">Fore Color</div>
<div class="a" style="left:1127px;top:633px;width:19px;height:13px;box-sizing:border-box;border:1px solid #000;background:#000"></div>
<div class="t" style="left:1153px;top:632px;letter-spacing:0px">0</div>
<div class="a" style="left:939px;top:649px;width:184px;height:18px;background:#f7f7f7"></div>
<div class="a" style="left:1123px;top:649px;width:2px;height:18px;background:#f9f9fa"></div>
<div class="a" style="left:1125px;top:649px;width:180px;height:18px;background:#f7f7f7"></div>
<div class="t" style="left:942px;top:651px;letter-spacing:0.04px">Text Align</div>
<div class="t" style="left:1128px;top:651px;letter-spacing:-0.15px">0-Left</div>
<div class="a" style="left:927px;top:673px;width:9px;height:9px;box-sizing:border-box;border:1px solid #000;background:#fbfbfb"></div><div class="a" style="left:929px;top:677px;width:5px;height:1px;background:#000"></div>
<div class="t b" style="left:942px;top:670px;letter-spacing:-0.27px">Position &amp; Size</div>
<div class="a" style="left:939px;top:687px;width:184px;height:18px;background:#f7f7f7"></div>
<div class="a" style="left:1123px;top:687px;width:2px;height:18px;background:#f9f9fa"></div>
<div class="a" style="left:1125px;top:687px;width:180px;height:18px;background:#f7f7f7"></div>
<div class="t" style="left:942px;top:689px;letter-spacing:-0.1px">Left</div>
<div class="t" style="left:1128px;top:689px;letter-spacing:-0.33px">0,4см (218)</div>
<div class="a" style="left:1288px;top:535px;width:16px;height:18px;box-sizing:border-box;border:1px solid #dadbe6;background:#f5f5f7"></div>
<div class="t b" style="left:1291px;top:537px;letter-spacing:.4px">...</div>
<div class="a" style="left:1304px;top:478px;width:1px;height:228px;background:#fff"></div>
<div class="a" style="left:1305px;top:478px;width:16px;height:228px;background:#f0f0f0"></div>
<div class="a" style="left:1306px;top:496px;width:14px;height:84px;background:#c2c3c9"></div>
<svg style="left:1308px;top:483px" width="10" height="8" viewBox="0 0 10 8"><path d="M1.2 6.2 L5 2.2 L8.8 6.2" stroke="#404040" stroke-width="1.8" fill="none"/></svg>
<svg style="left:1308px;top:692px" width="10" height="8" viewBox="0 0 10 8"><path d="M1.2 1.8 L5 5.8 L8.8 1.8" stroke="#404040" stroke-width="1.8" fill="none"/></svg>
<div class="a" style="left:925px;top:709px;width:396px;height:58px;background:#f5f5f5"></div>
<div class="t b" style="left:930px;top:713px;letter-spacing:-0.5px">Caption</div>
<!--BOTTOM-->
<div class="t" style="left:13px;top:745px;letter-spacing:-.3px">Record:</div>
<div class="sep" style="left:65px;top:741px;height:24px"></div>
<svg style="left:73px;top:743px" width="146" height="18" viewBox="73 743 146 18" fill="#8c8c8c">
<rect x="74" y="744" width="4.6" height="15"/><path d="M90 744 V759 L79.6 751.5Z"/>
<path d="M113.4 744 V759 L102.8 751.5Z"/>
<path d="M178.8 744 V759 L189.4 751.5Z"/>
<path d="M201.8 744 V759 L212.2 751.5Z"/><rect x="213.2" y="744" width="4.6" height="15"/>
</svg>
<div class="a" style="left:123px;top:743px;width:46px;height:18px;box-sizing:border-box;border:1px solid #5a5a5a;border-right-color:#5a5a5a;background:#e9e9eb"></div>
<div class="t" style="left:156px;top:744px;color:#8a8090;width:10px;text-align:center;font-size:11px">1</div>
<div class="t" style="left:311px;top:745px;color:#9a9a9a">of  1</div>
<div class="a" style="left:423px;top:740px;width:244px;height:24px;box-sizing:border-box;border:1px solid #dadbe6;background:#f5f5f7"></div>
<svg style="left:521px;top:744px" width="19" height="15" viewBox="521 744 19 15"><path d="M522.4 752.6 L527.4 757 L538.8 745.4" stroke="#a0a0a0" stroke-width="1.6" fill="none"/></svg>
<div class="t" style="left:544px;top:745px;color:#6d6d75;letter-spacing:-.9px">Save</div>
<div class="sep" style="left:669px;top:740px;height:25px"></div>
<div class="a" style="left:673px;top:740px;width:245px;height:24px;box-sizing:border-box;border:1px solid #dadbe6;background:#f5f5f7"></div>
<svg style="left:774px;top:743px" width="18" height="18" viewBox="774 743 18 18"><path d="M783 743.8 V760.6 M774.4 752.2 H791.6" stroke="#a6a6a6" stroke-width="2.6"/></svg>
<div class="t" style="left:797px;top:745px;color:#6d6d75">Add</div>
<!-- status bar -->
<div class="a" style="left:0;top:767px;width:1323px;height:21px;background:#007acc"></div>
<div class="t" style="left:4px;top:771px;color:#fff;letter-spacing:.15px">Main window</div>
<div class="t" style="left:1147px;top:771px;color:#fff;letter-spacing:-0.8px">5.4.8.24</div>
<svg style="left:1309px;top:775px" width="12" height="12" viewBox="0 0 12 12" fill="#6fb2e3"><rect x="8" y="1" width="2" height="2"/><rect x="5" y="4" width="2" height="2"/><rect x="8" y="4" width="2" height="2"/><rect x="2" y="7" width="2" height="2"/><rect x="5" y="7" width="2" height="2"/><rect x="8" y="7" width="2" height="2"/></svg>
<!-- window border -->
<div class="a" style="left:0;top:0;width:1323px;height:1px;background:#007acc"></div>
<div class="a" style="left:0;top:0;width:1px;height:788px;background:#007acc"></div>
<div class="a" style="left:1322px;top:0;width:1px;height:788px;background:#007acc"></div>
</body></html>
